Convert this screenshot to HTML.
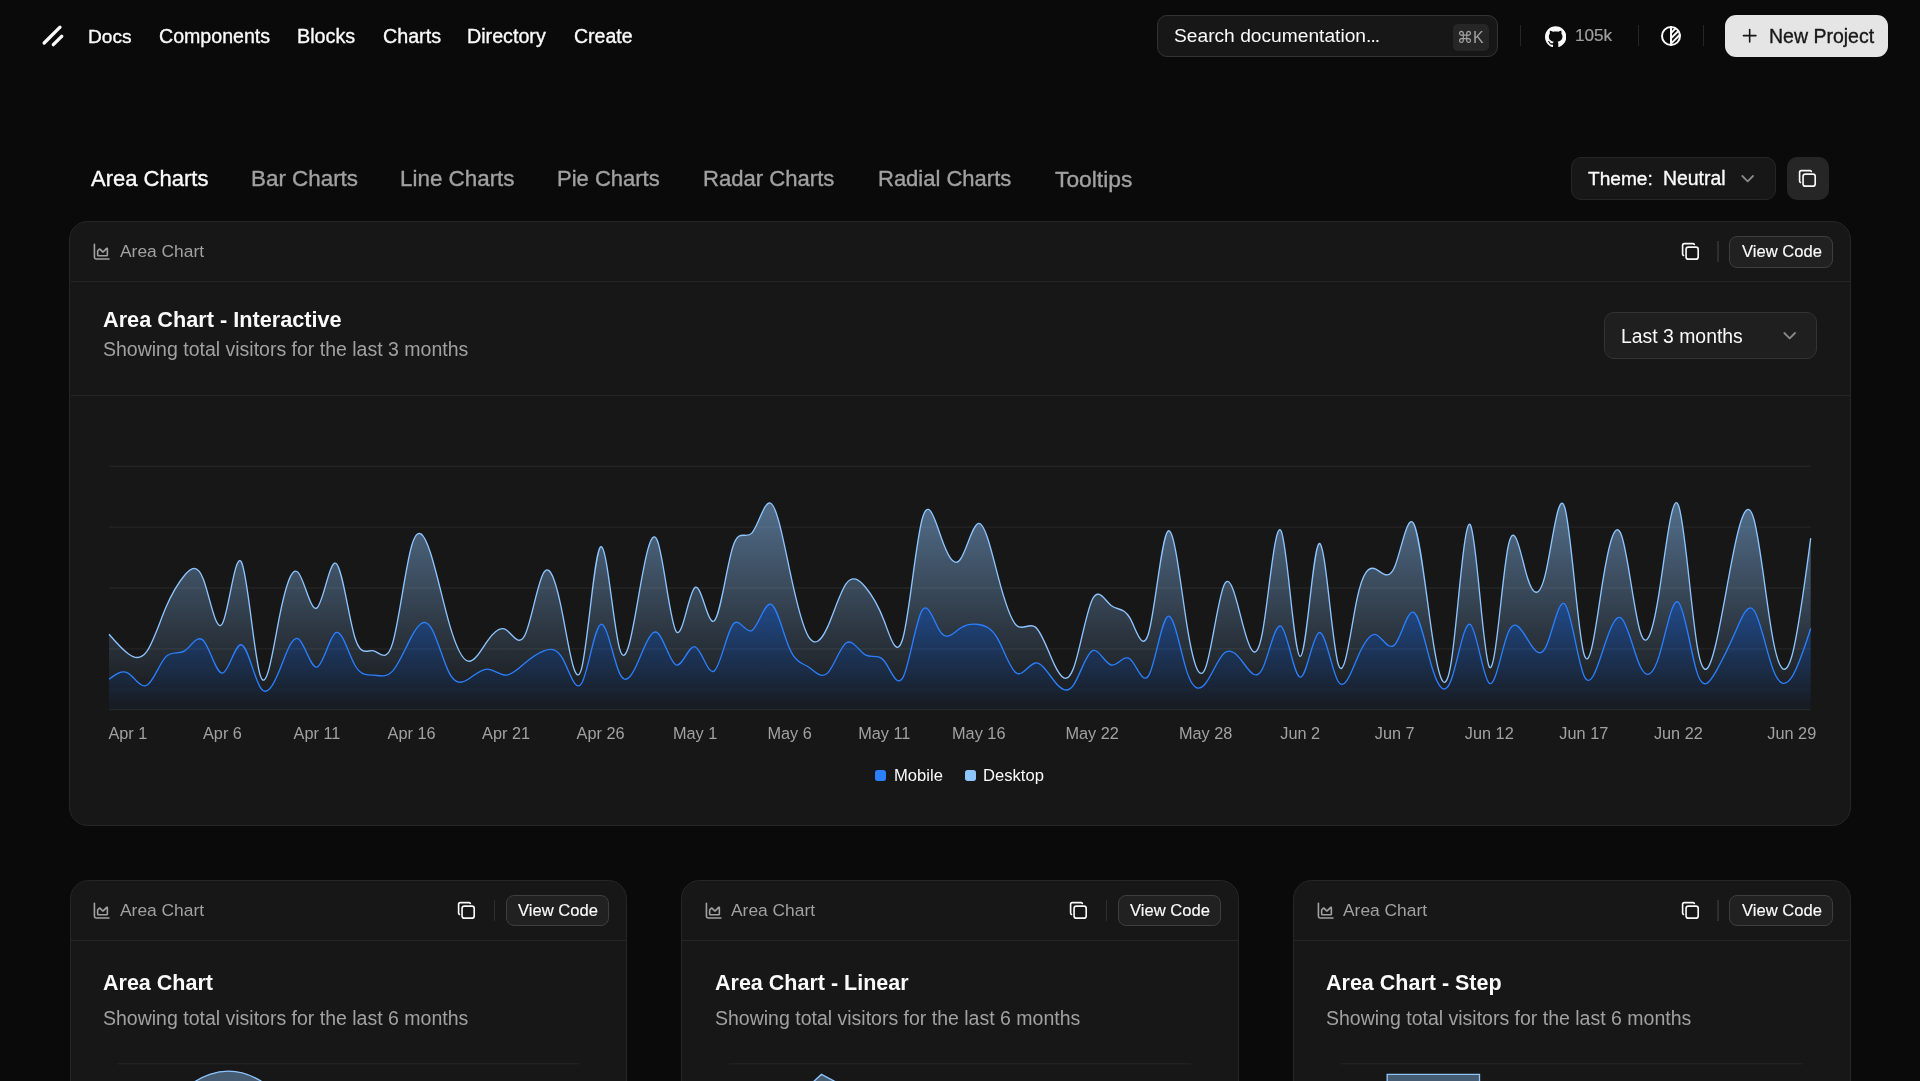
<!DOCTYPE html>
<html><head><meta charset="utf-8"><style>
html,body{margin:0;padding:0;background:#0a0a0a;width:1920px;height:1081px;overflow:hidden;}
body{position:relative;font-family:"Liberation Sans",sans-serif;}
.t{position:absolute;white-space:nowrap;line-height:normal;will-change:transform;}
.m{-webkit-text-stroke:0.35px currentColor;}
.icon{position:absolute;}
.icon svg{width:100%;height:100%;display:block;}
.card{position:absolute;background:#171717;border:1.33px solid #262626;border-radius:18.67px;box-sizing:border-box;overflow:hidden;}
.hline{position:absolute;height:1.33px;background:#262626;}
.sep{position:absolute;width:1.33px;background:#262626;}
.btn{position:absolute;box-sizing:border-box;border:1.33px solid #3e3e3e;background:#212121;border-radius:8px;}
</style></head><body>
<!-- header -->
<svg style="position:absolute;left:40.0px;top:22.9px" width="26.67" height="26.67" viewBox="0 0 256 256" fill="none" stroke="#fafafa" stroke-width="32" stroke-linecap="round"><line x1="208" y1="128" x2="128" y2="208"/><line x1="192" y1="40" x2="40" y2="192"/></svg>
<div class="t m" style="left:87.50px;top:25.51px;font-size:19.1px;color:#fafafa;font-weight:400;">Docs</div>
<div class="t m" style="left:158.50px;top:25.06px;font-size:19.6px;color:#fafafa;font-weight:400;">Components</div>
<div class="t m" style="left:297.40px;top:24.88px;font-size:19.8px;color:#fafafa;font-weight:400;">Blocks</div>
<div class="t m" style="left:382.60px;top:24.97px;font-size:19.7px;color:#fafafa;font-weight:400;">Charts</div>
<div class="t m" style="left:467.30px;top:24.97px;font-size:19.7px;color:#fafafa;font-weight:400;">Directory</div>
<div class="t m" style="left:574.10px;top:25.15px;font-size:19.5px;color:#fafafa;font-weight:400;">Create</div>

<div style="position:absolute;left:1157px;top:15px;width:341px;height:42px;box-sizing:border-box;border:1.33px solid #333;background:#171717;border-radius:10px"></div>
<div class="t " style="left:1173.50px;top:25.32px;font-size:19.2px;color:#fafafa;font-weight:400;">Search documentation<span style="letter-spacing:-0.9px">...</span></div>
<div style="position:absolute;left:1453px;top:24px;width:35.5px;height:26.7px;background:#262626;border-radius:5px"></div>
<div class="t " style="left:1457.20px;top:27.71px;font-size:15.9px;color:#a1a1a1;font-weight:400;">⌘K</div>
<div class="sep" style="left:1519.5px;top:25.4px;height:21px"></div>
<div class="icon" style="left:1544.8px;top:25.5px;width:21.33px;height:21.33px;color:#fafafa"><svg viewBox="0 0 24 24"><path fill="currentColor" d="M12 .297c-6.63 0-12 5.373-12 12 0 5.303 3.438 9.8 8.205 11.385.6.113.82-.258.82-.577 0-.285-.01-1.04-.015-2.04-3.338.724-4.042-1.61-4.042-1.61C4.422 18.070 3.633 17.7 3.633 17.7c-1.087-.744.084-.729.084-.729 1.205.084 1.838 1.236 1.838 1.236 1.07 1.835 2.809 1.305 3.495.998.108-.776.417-1.305.76-1.605-2.665-.3-5.466-1.332-5.466-5.930 0-1.310.465-2.380 1.235-3.220-.135-.303-.54-1.523.105-3.176 0 0 1.005-.322 3.3 1.230.96-.267 1.980-.399 3-.405 1.020.006 2.040.138 3 .405 2.280-1.552 3.285-1.230 3.285-1.230.645 1.653.24 2.873.12 3.176.765.84 1.230 1.910 1.230 3.220 0 4.610-2.805 5.625-5.475 5.920.42.36.81 1.096.81 2.220 0 1.606-.015 2.896-.015 3.286 0 .315.21.69.825.57C20.565 22.092 24 17.592 24 12.297c0-6.627-5.373-12-12-12"/></svg></div>
<div class="t " style="left:1575.00px;top:26.02px;font-size:17.1px;color:#a1a1a1;font-weight:400;-webkit-text-stroke:0.2px currentColor">105k</div>
<div class="sep" style="left:1637.5px;top:25.4px;height:21px"></div>
<div class="icon" style="left:1658.8px;top:23.9px;width:24px;height:24px;color:#fafafa"><svg viewBox="0 0 24 24" fill="none" stroke="currentColor" stroke-width="2" stroke-linecap="round" stroke-linejoin="round"><path d="M12 12m-9 0a9 9 0 1 0 18 0a9 9 0 1 0 -18 0"/><path d="M12 3l0 18"/><path d="M12 9l4.65 -4.65"/><path d="M12 14.3l7.37 -7.37"/><path d="M12 19.6l8.85 -8.85"/></svg></div>
<div class="sep" style="left:1703px;top:25.4px;height:21px"></div>
<div style="position:absolute;left:1725.3px;top:15px;width:162.5px;height:41.8px;background:#e5e5e5;border-radius:11px"></div>
<div class="icon" style="left:1738.7px;top:25.3px;width:21.33px;height:21.33px;color:#171717"><svg viewBox="0 0 24 24" fill="none" stroke="currentColor" stroke-width="1.8" stroke-linecap="round" stroke-linejoin="round"><path d="M5 12h14"/><path d="M12 5v14"/></svg></div>
<div class="t m" style="left:1768.50px;top:25.15px;font-size:19.5px;color:#171717;font-weight:400;">New Project</div>

<!-- tabs -->
<div class="t m" style="left:90.50px;top:166.33px;font-size:22px;color:#fafafa;font-weight:400;">Area Charts</div>
<div class="t m" style="left:251.00px;top:165.97px;font-size:22.4px;color:#a1a1a1;font-weight:400;">Bar Charts</div>
<div class="t m" style="left:400.00px;top:165.97px;font-size:22.4px;color:#a1a1a1;font-weight:400;">Line Charts</div>
<div class="t m" style="left:557.30px;top:166.33px;font-size:22px;color:#a1a1a1;font-weight:400;">Pie Charts</div>
<div class="t m" style="left:703.40px;top:166.24px;font-size:22.1px;color:#a1a1a1;font-weight:400;">Radar Charts</div>
<div class="t m" style="left:877.50px;top:166.33px;font-size:22px;color:#a1a1a1;font-weight:400;">Radial Charts</div>
<div class="t m" style="left:1055.00px;top:165.61px;font-size:22.8px;color:#a1a1a1;font-weight:400;">Tooltips</div>

<div style="position:absolute;left:1571px;top:157px;width:205px;height:43px;box-sizing:border-box;border:1.33px solid #262626;background:#171717;border-radius:10px"></div>
<div class="t m" style="left:1587.80px;top:167.71px;font-size:19.1px;color:#fafafa;font-weight:400;">Theme:</div>
<div class="t m" style="left:1662.80px;top:167.44px;font-size:19.4px;color:#fafafa;font-weight:400;">Neutral</div>
<div class="icon" style="left:1737.3px;top:168px;width:21.33px;height:21.33px;color:#8a8a8a"><svg viewBox="0 0 24 24" fill="none" stroke="currentColor" stroke-width="2" stroke-linecap="round" stroke-linejoin="round"><path d="m6 9 6 6 6-6"/></svg></div>
<div style="position:absolute;left:1787px;top:157px;width:42px;height:43px;background:#262626;border-radius:10px"></div>
<div class="icon" style="left:1797.1px;top:168.3px;width:20.8px;height:20.8px;color:#fafafa"><svg viewBox="0 0 24 24" fill="none" stroke="currentColor" stroke-width="1.9" stroke-linecap="round" stroke-linejoin="round"><path d="M7 9.667a2.667 2.667 0 0 1 2.667 -2.667h8.666a2.667 2.667 0 0 1 2.667 2.667v8.666a2.667 2.667 0 0 1 -2.667 2.667h-8.666a2.667 2.667 0 0 1 -2.667 -2.667z"/><path d="M4.012 16.737a2.005 2.005 0 0 1 -1.012 -1.737v-10c0 -1.1 .9 -2 2 -2h10c.75 0 1.158 .385 1.5 1"/></svg></div>

<!-- main card -->
<div class="card" style="left:69.3px;top:221.3px;width:1781.4px;height:604.9px"></div>
<div class="hline" style="left:70.6px;top:281px;width:1779px"></div>
<div class="icon" style="left:91.88px;top:242.28px;width:19.4px;height:19.4px;color:#a1a1a1"><svg viewBox="0 0 24 24" fill="none" stroke="currentColor" stroke-width="2" stroke-linecap="round" stroke-linejoin="round"><path d="M3 3v16a2 2 0 0 0 2 2h16"/><path d="M7 11.207a.5.5 0 0 1 .146-.353l2-2a.5.5 0 0 1 .708 0l3.292 3.292a.5.5 0 0 0 .708 0l4.292-4.292a.5.5 0 0 1 .854.353V16a1 1 0 0 1-1 1H8a1 1 0 0 1-1-1z"/></svg></div><div class="t " style="left:119.50px;top:241.35px;font-size:17.4px;color:#a1a1a1;font-weight:400;">Area Chart</div><div class="icon" style="left:1680.00px;top:241.40px;width:20.8px;height:20.8px;color:#fafafa"><svg viewBox="0 0 24 24" fill="none" stroke="currentColor" stroke-width="1.9" stroke-linecap="round" stroke-linejoin="round"><path d="M7 9.667a2.667 2.667 0 0 1 2.667 -2.667h8.666a2.667 2.667 0 0 1 2.667 2.667v8.666a2.667 2.667 0 0 1 -2.667 2.667h-8.666a2.667 2.667 0 0 1 -2.667 -2.667z"/><path d="M4.012 16.737a2.005 2.005 0 0 1 -1.012 -1.737v-10c0 -1.1 .9 -2 2 -2h10c.75 0 1.158 .385 1.5 1"/></svg></div><div class="sep" style="left:1717.30px;top:241.20px;height:21.2px;background:#2e2e2e"></div><div class="btn" style="left:1729.30px;top:236.10px;width:103.7px;height:31.9px"></div><div class="t " style="left:1742.10px;top:242.17px;font-size:16.6px;color:#fafafa;font-weight:400;-webkit-text-stroke:0.15px currentColor">View Code</div>
<div class="t " style="left:103.00px;top:307.25px;font-size:21.7px;color:#fafafa;font-weight:700;">Area Chart - Interactive</div>
<div class="t " style="left:102.80px;top:338.05px;font-size:19.5px;color:#a1a1a1;font-weight:400;">Showing total visitors for the last 3 months</div>
<div style="position:absolute;left:1604.4px;top:312.4px;width:212.4px;height:47.1px;box-sizing:border-box;border:1.33px solid #333;background:#1f1f1f;border-radius:10px"></div>
<div class="t " style="left:1621.00px;top:325.34px;font-size:19.4px;color:#fafafa;font-weight:400;">Last 3 months</div>
<div class="icon" style="left:1778.7px;top:325.3px;width:21.33px;height:21.33px;color:#8a8a8a"><svg viewBox="0 0 24 24" fill="none" stroke="currentColor" stroke-width="2" stroke-linecap="round" stroke-linejoin="round"><path d="m6 9 6 6 6-6"/></svg></div>
<div class="hline" style="left:70.6px;top:394.5px;width:1779px"></div>

<svg style="position:absolute;left:0;top:0" width="1920" height="1081">
<defs>
<linearGradient id="fillDesktop" x1="0" y1="0" x2="0" y2="1"><stop offset="5%" stop-color="#8ec5ff" stop-opacity="0.8"/><stop offset="95%" stop-color="#8ec5ff" stop-opacity="0.1"/></linearGradient>
<linearGradient id="fillMobile" x1="0" y1="0" x2="0" y2="1"><stop offset="5%" stop-color="#2b7fff" stop-opacity="0.8"/><stop offset="95%" stop-color="#2b7fff" stop-opacity="0.1"/></linearGradient>
</defs>
<g stroke="#242424" stroke-width="1.33">
<line x1="109" x2="1810.7" y1="466.4" y2="466.4"/><line x1="109" x2="1810.7" y1="527.2" y2="527.2"/><line x1="109" x2="1810.7" y1="588" y2="588"/><line x1="109" x2="1810.7" y1="648.8" y2="648.8"/><line x1="109" x2="1810.7" y1="709.6" y2="709.6"/>
</g>
<path d="M109,679.2C115.3,674.39,121.61,669.59,127.91,673.12C134.21,676.65,140.51,688.52,146.82,685.28C153.12,682.04,159.42,663.69,165.72,656.91C172.03,650.12,178.33,654.89,184.63,650.83C190.93,646.76,197.24,633.85,203.54,640.69C209.84,647.54,216.14,674.13,222.45,673.12C228.75,672.11,235.05,643.48,241.35,644.75C247.66,646.01,253.96,677.16,260.26,687.31C266.56,697.46,272.87,686.61,279.17,671.09C285.47,655.58,291.78,635.4,298.08,638.67C304.38,641.93,310.68,668.65,316.99,667.04C323.29,665.43,329.59,635.51,335.89,632.59C342.2,629.66,348.5,653.74,354.8,665.01C361.1,676.28,367.41,674.74,373.71,675.15C380.01,675.55,386.31,677.89,392.62,671.09C398.92,664.29,405.22,648.36,411.52,636.64C417.83,624.92,424.13,617.43,430.43,626.51C436.73,635.58,443.04,661.22,449.34,673.12C455.64,685.02,461.95,683.2,468.25,679.2C474.55,675.2,480.85,669.04,487.16,669.07C493.46,669.1,499.76,675.32,506.06,675.15C512.37,674.97,518.67,668.4,524.97,662.99C531.27,657.58,537.58,653.34,543.88,650.83C550.18,648.32,556.48,647.54,562.79,658.93C569.09,670.33,575.39,693.9,581.69,683.25C588,672.61,594.3,627.75,600.6,624.48C606.9,621.21,613.21,659.54,619.51,673.12C625.81,686.7,632.12,675.53,638.42,660.96C644.72,646.39,651.02,628.43,657.33,632.59C663.63,636.74,669.93,663.01,676.23,665.01C682.54,667.02,688.84,644.75,695.14,646.77C701.44,648.8,707.75,675.11,714.05,671.09C720.35,667.08,726.65,632.74,732.96,624.48C739.26,616.22,745.56,634.03,751.86,630.56C758.17,627.09,764.47,602.34,770.77,604.21C777.07,606.08,783.38,634.57,789.68,648.8C795.98,663.03,802.29,662.99,808.59,667.04C814.89,671.09,821.19,679.23,827.5,673.12C833.8,667.01,840.1,646.66,846.4,642.72C852.71,638.78,859.01,651.25,865.31,654.88C871.61,658.51,877.92,653.28,884.22,660.96C890.52,668.64,896.82,689.21,903.13,677.17C909.43,665.13,915.73,620.47,922.03,610.29C928.34,600.11,934.64,624.41,940.94,632.59C947.24,640.76,953.55,632.81,959.85,628.53C966.15,624.25,972.46,623.64,978.76,624.48C985.06,625.32,991.36,627.6,997.67,638.67C1003.97,649.74,1010.27,669.6,1016.57,673.12C1022.88,676.64,1029.18,663.84,1035.48,662.99C1041.78,662.14,1048.09,673.25,1054.39,681.23C1060.69,689.21,1066.99,694.06,1073.3,685.28C1079.6,676.5,1085.9,654.1,1092.2,650.83C1098.51,647.55,1104.81,663.39,1111.11,665.01C1117.41,666.63,1123.72,654.03,1130.02,658.93C1136.32,663.83,1142.63,686.23,1148.93,675.15C1155.23,664.06,1161.53,619.5,1167.84,616.37C1174.14,613.25,1180.44,651.55,1186.74,671.09C1193.05,690.64,1199.35,691.41,1205.65,683.25C1211.95,675.09,1218.26,657.99,1224.56,652.85C1230.86,647.71,1237.16,654.53,1243.47,662.99C1249.77,671.44,1256.07,681.54,1262.37,669.07C1268.68,656.59,1274.98,621.55,1281.28,626.51C1287.58,631.47,1293.89,676.43,1300.19,677.17C1306.49,677.92,1312.8,634.45,1319.1,632.59C1325.4,630.73,1331.7,670.48,1338.01,681.23C1344.31,691.98,1350.61,673.73,1356.91,658.93C1363.22,644.14,1369.52,632.79,1375.82,634.61C1382.12,636.44,1388.43,651.44,1394.73,644.75C1401.03,638.05,1407.33,609.66,1413.64,612.32C1419.94,614.98,1426.24,648.69,1432.54,669.07C1438.85,689.44,1445.15,696.48,1451.45,679.2C1457.75,661.92,1464.06,620.33,1470.36,624.48C1476.66,628.63,1482.97,678.53,1489.27,683.25C1495.57,687.98,1501.87,647.54,1508.18,632.59C1514.48,617.63,1520.78,628.16,1527.08,638.67C1533.39,649.18,1539.69,659.67,1545.99,646.77C1552.29,633.88,1558.6,597.6,1564.9,604.21C1571.2,610.82,1577.5,660.32,1583.81,675.15C1590.11,689.97,1596.41,670.14,1602.71,650.83C1609.02,631.52,1615.32,612.74,1621.62,618.4C1627.92,624.06,1634.23,654.16,1640.53,667.04C1646.83,679.92,1653.14,675.57,1659.44,654.88C1665.74,634.19,1672.04,597.14,1678.35,602.19C1684.65,607.23,1690.95,654.36,1697.25,673.12C1703.56,691.88,1709.86,682.29,1716.16,671.09C1722.46,659.9,1728.77,647.12,1735.07,632.59C1741.37,618.06,1747.67,601.78,1753.98,610.29C1760.28,618.81,1766.58,652.11,1772.88,669.07C1779.19,686.03,1785.49,686.65,1791.79,677.17C1798.09,667.69,1804.4,648.11,1810.7,628.53L1810.7,709.6L109,709.6Z" fill="url(#fillMobile)" fill-opacity="0.6"/>
<path d="M109,634.21C115.3,641.49,121.61,648.77,127.91,653.46C134.21,658.16,140.51,660.27,146.82,651.43C153.12,642.6,159.42,622.83,165.72,607.86C172.03,592.89,178.33,582.73,184.63,575.23C190.93,567.74,197.24,562.91,203.54,579.69C209.84,596.47,216.14,634.86,222.45,623.47C228.75,612.07,235.05,550.89,241.35,561.86C247.66,572.82,253.96,655.94,260.26,675.35C266.56,694.76,272.87,650.46,279.17,618.2C285.47,585.94,291.78,565.71,298.08,572.39C304.38,579.07,310.68,612.66,316.99,607.86C323.29,603.07,329.59,559.89,335.89,563.27C342.2,566.66,348.5,616.59,354.8,637.25C361.1,657.9,367.41,649.28,373.71,650.83C380.01,652.38,386.31,664.1,392.62,643.13C398.92,622.15,405.22,568.47,411.52,546.25C417.83,524.03,424.13,533.26,430.43,552.74C436.73,572.21,443.04,601.92,449.34,623.87C455.64,645.82,461.95,660.01,468.25,661.16C474.55,662.31,480.85,650.42,487.16,641.3C493.46,632.18,499.76,625.82,506.06,629.75C512.37,633.68,518.67,647.89,524.97,635.02C531.27,622.15,537.58,582.19,543.88,572.39C550.18,562.6,556.48,582.98,562.79,615.36C569.09,647.74,575.39,692.12,581.69,668.05C588,643.99,594.3,551.47,600.6,546.86C606.9,542.25,613.21,625.54,619.51,648.39C625.81,671.25,632.12,633.68,638.42,597.12C644.72,560.56,651.02,525.01,657.33,540.58C663.63,556.15,669.93,622.84,676.23,631.57C682.54,640.31,688.84,591.08,695.14,587.39C701.44,583.71,707.75,625.56,714.05,621.03C720.35,616.51,726.65,565.59,732.96,546.45C739.26,527.32,745.56,539.96,751.86,533.08C758.17,526.19,764.47,499.78,770.77,503.29C777.07,506.79,783.38,540.2,789.68,570.17C795.98,600.13,802.29,626.64,808.59,636.84C814.89,647.04,821.19,640.94,827.5,627.11C833.8,613.29,840.1,591.76,846.4,583.34C852.71,574.92,859.01,579.61,865.31,586.99C871.61,594.36,877.92,604.41,884.22,621.03C890.52,637.66,896.82,660.86,903.13,637.25C909.43,613.64,915.73,543.23,922.03,519.5C928.34,495.77,934.64,518.72,940.94,536.73C947.24,554.73,953.55,567.77,959.85,560.03C966.15,552.29,972.46,523.77,978.76,523.35C985.06,522.93,991.36,550.63,997.67,574.83C1003.97,599.03,1010.27,619.73,1016.57,625.49C1022.88,631.26,1029.18,622.09,1035.48,627.11C1041.78,632.14,1048.09,651.36,1054.39,664.61C1060.69,677.85,1066.99,685.12,1073.3,668.86C1079.6,652.61,1085.9,612.83,1092.2,599.75C1098.51,586.68,1104.81,600.33,1111.11,605.43C1117.41,610.53,1123.72,607.1,1130.02,618.2C1136.32,629.3,1142.63,654.93,1148.93,631.98C1155.23,609.03,1161.53,537.51,1167.84,531.25C1174.14,525,1180.44,584.01,1186.74,623.87C1193.05,663.74,1199.35,684.45,1205.65,667.45C1211.95,650.44,1218.26,595.71,1224.56,583.95C1230.86,572.18,1237.16,603.39,1243.47,626.91C1249.77,650.44,1256.07,666.29,1262.37,632.99C1268.68,599.69,1274.98,517.25,1281.28,531.25C1287.58,545.26,1293.89,655.72,1300.19,656.3C1306.49,656.88,1312.8,547.59,1319.1,543.62C1325.4,539.64,1331.7,640.98,1338.01,663.39C1344.31,685.8,1350.61,629.28,1356.91,599.35C1363.22,569.42,1369.52,566.1,1375.82,569.15C1382.12,572.21,1388.43,581.64,1394.73,566.72C1401.03,551.8,1407.33,512.52,1413.64,523.55C1419.94,534.58,1426.24,595.93,1432.54,637.65C1438.85,679.38,1445.15,701.49,1451.45,660.55C1457.75,619.62,1464.06,515.64,1470.36,524.77C1476.66,533.89,1482.97,656.12,1489.27,666.84C1495.57,677.55,1501.87,576.75,1508.18,546.25C1514.48,515.75,1520.78,555.55,1527.08,576.45C1533.39,597.35,1539.69,599.35,1545.99,571.58C1552.29,543.81,1558.6,486.27,1564.9,507.95C1571.2,529.63,1577.5,630.53,1583.81,653.46C1590.11,676.39,1596.41,621.34,1602.71,581.72C1609.02,542.09,1615.32,517.89,1621.62,535.71C1627.92,553.54,1634.23,613.39,1640.53,632.79C1646.83,652.18,1653.14,631.12,1659.44,590.63C1665.74,550.15,1672.04,490.25,1678.35,504.91C1684.65,519.56,1690.95,608.76,1697.25,646.37C1703.56,683.97,1709.86,669.98,1716.16,642.52C1722.46,615.06,1728.77,574.13,1735.07,544.63C1741.37,515.13,1747.67,497.06,1753.98,519.5C1760.28,541.93,1766.58,604.88,1772.88,638.87C1779.19,672.86,1785.49,677.91,1791.79,656.3C1798.09,634.69,1804.4,586.42,1810.7,538.14L1810.7,628.53C1804.4,648.11,1798.09,667.69,1791.79,677.17C1785.49,686.65,1779.19,686.03,1772.88,669.07C1766.58,652.11,1760.28,618.81,1753.98,610.29C1747.67,601.78,1741.37,618.06,1735.07,632.59C1728.77,647.12,1722.46,659.9,1716.16,671.09C1709.86,682.29,1703.56,691.88,1697.25,673.12C1690.95,654.36,1684.65,607.23,1678.35,602.19C1672.04,597.14,1665.74,634.19,1659.44,654.88C1653.14,675.57,1646.83,679.92,1640.53,667.04C1634.23,654.16,1627.92,624.06,1621.62,618.4C1615.32,612.74,1609.02,631.52,1602.71,650.83C1596.41,670.14,1590.11,689.97,1583.81,675.15C1577.5,660.32,1571.2,610.82,1564.9,604.21C1558.6,597.6,1552.29,633.88,1545.99,646.77C1539.69,659.67,1533.39,649.18,1527.08,638.67C1520.78,628.16,1514.48,617.63,1508.18,632.59C1501.87,647.54,1495.57,687.98,1489.27,683.25C1482.97,678.53,1476.66,628.63,1470.36,624.48C1464.06,620.33,1457.75,661.92,1451.45,679.2C1445.15,696.48,1438.85,689.44,1432.54,669.07C1426.24,648.69,1419.94,614.98,1413.64,612.32C1407.33,609.66,1401.03,638.05,1394.73,644.75C1388.43,651.44,1382.12,636.44,1375.82,634.61C1369.52,632.79,1363.22,644.14,1356.91,658.93C1350.61,673.73,1344.31,691.98,1338.01,681.23C1331.7,670.48,1325.4,630.73,1319.1,632.59C1312.8,634.45,1306.49,677.92,1300.19,677.17C1293.89,676.43,1287.58,631.47,1281.28,626.51C1274.98,621.55,1268.68,656.59,1262.37,669.07C1256.07,681.54,1249.77,671.44,1243.47,662.99C1237.16,654.53,1230.86,647.71,1224.56,652.85C1218.26,657.99,1211.95,675.09,1205.65,683.25C1199.35,691.41,1193.05,690.64,1186.74,671.09C1180.44,651.55,1174.14,613.25,1167.84,616.37C1161.53,619.5,1155.23,664.06,1148.93,675.15C1142.63,686.23,1136.32,663.83,1130.02,658.93C1123.72,654.03,1117.41,666.63,1111.11,665.01C1104.81,663.39,1098.51,647.55,1092.2,650.83C1085.9,654.1,1079.6,676.5,1073.3,685.28C1066.99,694.06,1060.69,689.21,1054.39,681.23C1048.09,673.25,1041.78,662.14,1035.48,662.99C1029.18,663.84,1022.88,676.64,1016.57,673.12C1010.27,669.6,1003.97,649.74,997.67,638.67C991.36,627.6,985.06,625.32,978.76,624.48C972.46,623.64,966.15,624.25,959.85,628.53C953.55,632.81,947.24,640.76,940.94,632.59C934.64,624.41,928.34,600.11,922.03,610.29C915.73,620.47,909.43,665.13,903.13,677.17C896.82,689.21,890.52,668.64,884.22,660.96C877.92,653.28,871.61,658.51,865.31,654.88C859.01,651.25,852.71,638.78,846.4,642.72C840.1,646.66,833.8,667.01,827.5,673.12C821.19,679.23,814.89,671.09,808.59,667.04C802.29,662.99,795.98,663.03,789.68,648.8C783.38,634.57,777.07,606.08,770.77,604.21C764.47,602.34,758.17,627.09,751.86,630.56C745.56,634.03,739.26,616.22,732.96,624.48C726.65,632.74,720.35,667.08,714.05,671.09C707.75,675.11,701.44,648.8,695.14,646.77C688.84,644.75,682.54,667.02,676.23,665.01C669.93,663.01,663.63,636.74,657.33,632.59C651.02,628.43,644.72,646.39,638.42,660.96C632.12,675.53,625.81,686.7,619.51,673.12C613.21,659.54,606.9,621.21,600.6,624.48C594.3,627.75,588,672.61,581.69,683.25C575.39,693.9,569.09,670.33,562.79,658.93C556.48,647.54,550.18,648.32,543.88,650.83C537.58,653.34,531.27,657.58,524.97,662.99C518.67,668.4,512.37,674.97,506.06,675.15C499.76,675.32,493.46,669.1,487.16,669.07C480.85,669.04,474.55,675.2,468.25,679.2C461.95,683.2,455.64,685.02,449.34,673.12C443.04,661.22,436.73,635.58,430.43,626.51C424.13,617.43,417.83,624.92,411.52,636.64C405.22,648.36,398.92,664.29,392.62,671.09C386.31,677.89,380.01,675.55,373.71,675.15C367.41,674.74,361.1,676.28,354.8,665.01C348.5,653.74,342.2,629.66,335.89,632.59C329.59,635.51,323.29,665.43,316.99,667.04C310.68,668.65,304.38,641.93,298.08,638.67C291.78,635.4,285.47,655.58,279.17,671.09C272.87,686.61,266.56,697.46,260.26,687.31C253.96,677.16,247.66,646.01,241.35,644.75C235.05,643.48,228.75,672.11,222.45,673.12C216.14,674.13,209.84,647.54,203.54,640.69C197.24,633.85,190.93,646.76,184.63,650.83C178.33,654.89,172.03,650.12,165.72,656.91C159.42,663.69,153.12,682.04,146.82,685.28C140.51,688.52,134.21,676.65,127.91,673.12C121.61,669.59,115.3,674.39,109,679.2Z" fill="url(#fillDesktop)" fill-opacity="0.6"/>
<path d="M109,679.2C115.3,674.39,121.61,669.59,127.91,673.12C134.21,676.65,140.51,688.52,146.82,685.28C153.12,682.04,159.42,663.69,165.72,656.91C172.03,650.12,178.33,654.89,184.63,650.83C190.93,646.76,197.24,633.85,203.54,640.69C209.84,647.54,216.14,674.13,222.45,673.12C228.75,672.11,235.05,643.48,241.35,644.75C247.66,646.01,253.96,677.16,260.26,687.31C266.56,697.46,272.87,686.61,279.17,671.09C285.47,655.58,291.78,635.4,298.08,638.67C304.38,641.93,310.68,668.65,316.99,667.04C323.29,665.43,329.59,635.51,335.89,632.59C342.2,629.66,348.5,653.74,354.8,665.01C361.1,676.28,367.41,674.74,373.71,675.15C380.01,675.55,386.31,677.89,392.62,671.09C398.92,664.29,405.22,648.36,411.52,636.64C417.83,624.92,424.13,617.43,430.43,626.51C436.73,635.58,443.04,661.22,449.34,673.12C455.64,685.02,461.95,683.2,468.25,679.2C474.55,675.2,480.85,669.04,487.16,669.07C493.46,669.1,499.76,675.32,506.06,675.15C512.37,674.97,518.67,668.4,524.97,662.99C531.27,657.58,537.58,653.34,543.88,650.83C550.18,648.32,556.48,647.54,562.79,658.93C569.09,670.33,575.39,693.9,581.69,683.25C588,672.61,594.3,627.75,600.6,624.48C606.9,621.21,613.21,659.54,619.51,673.12C625.81,686.7,632.12,675.53,638.42,660.96C644.72,646.39,651.02,628.43,657.33,632.59C663.63,636.74,669.93,663.01,676.23,665.01C682.54,667.02,688.84,644.75,695.14,646.77C701.44,648.8,707.75,675.11,714.05,671.09C720.35,667.08,726.65,632.74,732.96,624.48C739.26,616.22,745.56,634.03,751.86,630.56C758.17,627.09,764.47,602.34,770.77,604.21C777.07,606.08,783.38,634.57,789.68,648.8C795.98,663.03,802.29,662.99,808.59,667.04C814.89,671.09,821.19,679.23,827.5,673.12C833.8,667.01,840.1,646.66,846.4,642.72C852.71,638.78,859.01,651.25,865.31,654.88C871.61,658.51,877.92,653.28,884.22,660.96C890.52,668.64,896.82,689.21,903.13,677.17C909.43,665.13,915.73,620.47,922.03,610.29C928.34,600.11,934.64,624.41,940.94,632.59C947.24,640.76,953.55,632.81,959.85,628.53C966.15,624.25,972.46,623.64,978.76,624.48C985.06,625.32,991.36,627.6,997.67,638.67C1003.97,649.74,1010.27,669.6,1016.57,673.12C1022.88,676.64,1029.18,663.84,1035.48,662.99C1041.78,662.14,1048.09,673.25,1054.39,681.23C1060.69,689.21,1066.99,694.06,1073.3,685.28C1079.6,676.5,1085.9,654.1,1092.2,650.83C1098.51,647.55,1104.81,663.39,1111.11,665.01C1117.41,666.63,1123.72,654.03,1130.02,658.93C1136.32,663.83,1142.63,686.23,1148.93,675.15C1155.23,664.06,1161.53,619.5,1167.84,616.37C1174.14,613.25,1180.44,651.55,1186.74,671.09C1193.05,690.64,1199.35,691.41,1205.65,683.25C1211.95,675.09,1218.26,657.99,1224.56,652.85C1230.86,647.71,1237.16,654.53,1243.47,662.99C1249.77,671.44,1256.07,681.54,1262.37,669.07C1268.68,656.59,1274.98,621.55,1281.28,626.51C1287.58,631.47,1293.89,676.43,1300.19,677.17C1306.49,677.92,1312.8,634.45,1319.1,632.59C1325.4,630.73,1331.7,670.48,1338.01,681.23C1344.31,691.98,1350.61,673.73,1356.91,658.93C1363.22,644.14,1369.52,632.79,1375.82,634.61C1382.12,636.44,1388.43,651.44,1394.73,644.75C1401.03,638.05,1407.33,609.66,1413.64,612.32C1419.94,614.98,1426.24,648.69,1432.54,669.07C1438.85,689.44,1445.15,696.48,1451.45,679.2C1457.75,661.92,1464.06,620.33,1470.36,624.48C1476.66,628.63,1482.97,678.53,1489.27,683.25C1495.57,687.98,1501.87,647.54,1508.18,632.59C1514.48,617.63,1520.78,628.16,1527.08,638.67C1533.39,649.18,1539.69,659.67,1545.99,646.77C1552.29,633.88,1558.6,597.6,1564.9,604.21C1571.2,610.82,1577.5,660.32,1583.81,675.15C1590.11,689.97,1596.41,670.14,1602.71,650.83C1609.02,631.52,1615.32,612.74,1621.62,618.4C1627.92,624.06,1634.23,654.16,1640.53,667.04C1646.83,679.92,1653.14,675.57,1659.44,654.88C1665.74,634.19,1672.04,597.14,1678.35,602.19C1684.65,607.23,1690.95,654.36,1697.25,673.12C1703.56,691.88,1709.86,682.29,1716.16,671.09C1722.46,659.9,1728.77,647.12,1735.07,632.59C1741.37,618.06,1747.67,601.78,1753.98,610.29C1760.28,618.81,1766.58,652.11,1772.88,669.07C1779.19,686.03,1785.49,686.65,1791.79,677.17C1798.09,667.69,1804.4,648.11,1810.7,628.53" fill="none" stroke="#2b7fff" stroke-width="1.33"/>
<path d="M109,634.21C115.3,641.49,121.61,648.77,127.91,653.46C134.21,658.16,140.51,660.27,146.82,651.43C153.12,642.6,159.42,622.83,165.72,607.86C172.03,592.89,178.33,582.73,184.63,575.23C190.93,567.74,197.24,562.91,203.54,579.69C209.84,596.47,216.14,634.86,222.45,623.47C228.75,612.07,235.05,550.89,241.35,561.86C247.66,572.82,253.96,655.94,260.26,675.35C266.56,694.76,272.87,650.46,279.17,618.2C285.47,585.94,291.78,565.71,298.08,572.39C304.38,579.07,310.68,612.66,316.99,607.86C323.29,603.07,329.59,559.89,335.89,563.27C342.2,566.66,348.5,616.59,354.8,637.25C361.1,657.9,367.41,649.28,373.71,650.83C380.01,652.38,386.31,664.1,392.62,643.13C398.92,622.15,405.22,568.47,411.52,546.25C417.83,524.03,424.13,533.26,430.43,552.74C436.73,572.21,443.04,601.92,449.34,623.87C455.64,645.82,461.95,660.01,468.25,661.16C474.55,662.31,480.85,650.42,487.16,641.3C493.46,632.18,499.76,625.82,506.06,629.75C512.37,633.68,518.67,647.89,524.97,635.02C531.27,622.15,537.58,582.19,543.88,572.39C550.18,562.6,556.48,582.98,562.79,615.36C569.09,647.74,575.39,692.12,581.69,668.05C588,643.99,594.3,551.47,600.6,546.86C606.9,542.25,613.21,625.54,619.51,648.39C625.81,671.25,632.12,633.68,638.42,597.12C644.72,560.56,651.02,525.01,657.33,540.58C663.63,556.15,669.93,622.84,676.23,631.57C682.54,640.31,688.84,591.08,695.14,587.39C701.44,583.71,707.75,625.56,714.05,621.03C720.35,616.51,726.65,565.59,732.96,546.45C739.26,527.32,745.56,539.96,751.86,533.08C758.17,526.19,764.47,499.78,770.77,503.29C777.07,506.79,783.38,540.2,789.68,570.17C795.98,600.13,802.29,626.64,808.59,636.84C814.89,647.04,821.19,640.94,827.5,627.11C833.8,613.29,840.1,591.76,846.4,583.34C852.71,574.92,859.01,579.61,865.31,586.99C871.61,594.36,877.92,604.41,884.22,621.03C890.52,637.66,896.82,660.86,903.13,637.25C909.43,613.64,915.73,543.23,922.03,519.5C928.34,495.77,934.64,518.72,940.94,536.73C947.24,554.73,953.55,567.77,959.85,560.03C966.15,552.29,972.46,523.77,978.76,523.35C985.06,522.93,991.36,550.63,997.67,574.83C1003.97,599.03,1010.27,619.73,1016.57,625.49C1022.88,631.26,1029.18,622.09,1035.48,627.11C1041.78,632.14,1048.09,651.36,1054.39,664.61C1060.69,677.85,1066.99,685.12,1073.3,668.86C1079.6,652.61,1085.9,612.83,1092.2,599.75C1098.51,586.68,1104.81,600.33,1111.11,605.43C1117.41,610.53,1123.72,607.1,1130.02,618.2C1136.32,629.3,1142.63,654.93,1148.93,631.98C1155.23,609.03,1161.53,537.51,1167.84,531.25C1174.14,525,1180.44,584.01,1186.74,623.87C1193.05,663.74,1199.35,684.45,1205.65,667.45C1211.95,650.44,1218.26,595.71,1224.56,583.95C1230.86,572.18,1237.16,603.39,1243.47,626.91C1249.77,650.44,1256.07,666.29,1262.37,632.99C1268.68,599.69,1274.98,517.25,1281.28,531.25C1287.58,545.26,1293.89,655.72,1300.19,656.3C1306.49,656.88,1312.8,547.59,1319.1,543.62C1325.4,539.64,1331.7,640.98,1338.01,663.39C1344.31,685.8,1350.61,629.28,1356.91,599.35C1363.22,569.42,1369.52,566.1,1375.82,569.15C1382.12,572.21,1388.43,581.64,1394.73,566.72C1401.03,551.8,1407.33,512.52,1413.64,523.55C1419.94,534.58,1426.24,595.93,1432.54,637.65C1438.85,679.38,1445.15,701.49,1451.45,660.55C1457.75,619.62,1464.06,515.64,1470.36,524.77C1476.66,533.89,1482.97,656.12,1489.27,666.84C1495.57,677.55,1501.87,576.75,1508.18,546.25C1514.48,515.75,1520.78,555.55,1527.08,576.45C1533.39,597.35,1539.69,599.35,1545.99,571.58C1552.29,543.81,1558.6,486.27,1564.9,507.95C1571.2,529.63,1577.5,630.53,1583.81,653.46C1590.11,676.39,1596.41,621.34,1602.71,581.72C1609.02,542.09,1615.32,517.89,1621.62,535.71C1627.92,553.54,1634.23,613.39,1640.53,632.79C1646.83,652.18,1653.14,631.12,1659.44,590.63C1665.74,550.15,1672.04,490.25,1678.35,504.91C1684.65,519.56,1690.95,608.76,1697.25,646.37C1703.56,683.97,1709.86,669.98,1716.16,642.52C1722.46,615.06,1728.77,574.13,1735.07,544.63C1741.37,515.13,1747.67,497.06,1753.98,519.5C1760.28,541.93,1766.58,604.88,1772.88,638.87C1779.19,672.86,1785.49,677.91,1791.79,656.3C1798.09,634.69,1804.4,586.42,1810.7,538.14" fill="none" stroke="#8ec5ff" stroke-width="1.33"/>
<g font-family="Liberation Sans" font-size="16.3" fill="#a1a1a1"><text x="127.91" y="739.2" text-anchor="middle">Apr 1</text><text x="222.45" y="739.2" text-anchor="middle">Apr 6</text><text x="316.99" y="739.2" text-anchor="middle">Apr 11</text><text x="411.52" y="739.2" text-anchor="middle">Apr 16</text><text x="506.06" y="739.2" text-anchor="middle">Apr 21</text><text x="600.60" y="739.2" text-anchor="middle">Apr 26</text><text x="695.14" y="739.2" text-anchor="middle">May 1</text><text x="789.68" y="739.2" text-anchor="middle">May 6</text><text x="884.22" y="739.2" text-anchor="middle">May 11</text><text x="978.76" y="739.2" text-anchor="middle">May 16</text><text x="1092.20" y="739.2" text-anchor="middle">May 22</text><text x="1205.65" y="739.2" text-anchor="middle">May 28</text><text x="1300.19" y="739.2" text-anchor="middle">Jun 2</text><text x="1394.73" y="739.2" text-anchor="middle">Jun 7</text><text x="1489.27" y="739.2" text-anchor="middle">Jun 12</text><text x="1583.81" y="739.2" text-anchor="middle">Jun 17</text><text x="1678.35" y="739.2" text-anchor="middle">Jun 22</text><text x="1791.79" y="739.2" text-anchor="middle">Jun 29</text></g>
</svg>
<div style="position:absolute;left:875px;top:770px;width:11px;height:11px;background:#2b7fff;border-radius:2.67px"></div>
<div class="t " style="left:893.70px;top:765.77px;font-size:16.6px;color:#fafafa;font-weight:400;">Mobile</div>
<div style="position:absolute;left:964.5px;top:770px;width:11px;height:11px;background:#8ec5ff;border-radius:2.67px"></div>
<div class="t " style="left:983.40px;top:765.77px;font-size:16.6px;color:#fafafa;font-weight:400;">Desktop</div>

<!-- bottom cards -->
<div class="card" style="left:69.5px;top:879.8px;width:557.5px;height:300px"></div>
<div class="hline" style="left:70.8px;top:939.7px;width:555px"></div>
<div class="icon" style="left:92.08px;top:900.78px;width:19.4px;height:19.4px;color:#a1a1a1"><svg viewBox="0 0 24 24" fill="none" stroke="currentColor" stroke-width="2" stroke-linecap="round" stroke-linejoin="round"><path d="M3 3v16a2 2 0 0 0 2 2h16"/><path d="M7 11.207a.5.5 0 0 1 .146-.353l2-2a.5.5 0 0 1 .708 0l3.292 3.292a.5.5 0 0 0 .708 0l4.292-4.292a.5.5 0 0 1 .854.353V16a1 1 0 0 1-1 1H8a1 1 0 0 1-1-1z"/></svg></div><div class="t " style="left:119.70px;top:899.85px;font-size:17.4px;color:#a1a1a1;font-weight:400;">Area Chart</div><div class="icon" style="left:456.30px;top:899.90px;width:20.8px;height:20.8px;color:#fafafa"><svg viewBox="0 0 24 24" fill="none" stroke="currentColor" stroke-width="1.9" stroke-linecap="round" stroke-linejoin="round"><path d="M7 9.667a2.667 2.667 0 0 1 2.667 -2.667h8.666a2.667 2.667 0 0 1 2.667 2.667v8.666a2.667 2.667 0 0 1 -2.667 2.667h-8.666a2.667 2.667 0 0 1 -2.667 -2.667z"/><path d="M4.012 16.737a2.005 2.005 0 0 1 -1.012 -1.737v-10c0 -1.1 .9 -2 2 -2h10c.75 0 1.158 .385 1.5 1"/></svg></div><div class="sep" style="left:493.60px;top:899.70px;height:21.2px;background:#2e2e2e"></div><div class="btn" style="left:505.60px;top:894.60px;width:103.7px;height:31.9px"></div><div class="t " style="left:518.40px;top:900.67px;font-size:16.6px;color:#fafafa;font-weight:400;-webkit-text-stroke:0.15px currentColor">View Code</div>
<div class="t " style="left:103.00px;top:970.84px;font-size:21.5px;color:#fafafa;font-weight:700;">Area Chart</div>
<div class="t " style="left:103.00px;top:1006.75px;font-size:19.5px;color:#a1a1a1;font-weight:400;">Showing total visitors for the last 6 months</div>

<div class="card" style="left:681px;top:879.8px;width:558px;height:300px"></div>
<div class="hline" style="left:682.3px;top:939.7px;width:555.5px"></div>
<div class="icon" style="left:703.58px;top:900.78px;width:19.4px;height:19.4px;color:#a1a1a1"><svg viewBox="0 0 24 24" fill="none" stroke="currentColor" stroke-width="2" stroke-linecap="round" stroke-linejoin="round"><path d="M3 3v16a2 2 0 0 0 2 2h16"/><path d="M7 11.207a.5.5 0 0 1 .146-.353l2-2a.5.5 0 0 1 .708 0l3.292 3.292a.5.5 0 0 0 .708 0l4.292-4.292a.5.5 0 0 1 .854.353V16a1 1 0 0 1-1 1H8a1 1 0 0 1-1-1z"/></svg></div><div class="t " style="left:731.20px;top:899.85px;font-size:17.4px;color:#a1a1a1;font-weight:400;">Area Chart</div><div class="icon" style="left:1068.30px;top:899.90px;width:20.8px;height:20.8px;color:#fafafa"><svg viewBox="0 0 24 24" fill="none" stroke="currentColor" stroke-width="1.9" stroke-linecap="round" stroke-linejoin="round"><path d="M7 9.667a2.667 2.667 0 0 1 2.667 -2.667h8.666a2.667 2.667 0 0 1 2.667 2.667v8.666a2.667 2.667 0 0 1 -2.667 2.667h-8.666a2.667 2.667 0 0 1 -2.667 -2.667z"/><path d="M4.012 16.737a2.005 2.005 0 0 1 -1.012 -1.737v-10c0 -1.1 .9 -2 2 -2h10c.75 0 1.158 .385 1.5 1"/></svg></div><div class="sep" style="left:1105.60px;top:899.70px;height:21.2px;background:#2e2e2e"></div><div class="btn" style="left:1117.60px;top:894.60px;width:103.7px;height:31.9px"></div><div class="t " style="left:1130.40px;top:900.67px;font-size:16.6px;color:#fafafa;font-weight:400;-webkit-text-stroke:0.15px currentColor">View Code</div>
<div class="t " style="left:714.50px;top:970.84px;font-size:21.5px;color:#fafafa;font-weight:700;">Area Chart - Linear</div>
<div class="t " style="left:714.50px;top:1006.75px;font-size:19.5px;color:#a1a1a1;font-weight:400;">Showing total visitors for the last 6 months</div>

<div class="card" style="left:1293px;top:879.8px;width:557.7px;height:300px"></div>
<div class="hline" style="left:1294.3px;top:939.7px;width:555px"></div>
<div class="icon" style="left:1315.58px;top:900.78px;width:19.4px;height:19.4px;color:#a1a1a1"><svg viewBox="0 0 24 24" fill="none" stroke="currentColor" stroke-width="2" stroke-linecap="round" stroke-linejoin="round"><path d="M3 3v16a2 2 0 0 0 2 2h16"/><path d="M7 11.207a.5.5 0 0 1 .146-.353l2-2a.5.5 0 0 1 .708 0l3.292 3.292a.5.5 0 0 0 .708 0l4.292-4.292a.5.5 0 0 1 .854.353V16a1 1 0 0 1-1 1H8a1 1 0 0 1-1-1z"/></svg></div><div class="t " style="left:1343.20px;top:899.85px;font-size:17.4px;color:#a1a1a1;font-weight:400;">Area Chart</div><div class="icon" style="left:1680.00px;top:899.90px;width:20.8px;height:20.8px;color:#fafafa"><svg viewBox="0 0 24 24" fill="none" stroke="currentColor" stroke-width="1.9" stroke-linecap="round" stroke-linejoin="round"><path d="M7 9.667a2.667 2.667 0 0 1 2.667 -2.667h8.666a2.667 2.667 0 0 1 2.667 2.667v8.666a2.667 2.667 0 0 1 -2.667 2.667h-8.666a2.667 2.667 0 0 1 -2.667 -2.667z"/><path d="M4.012 16.737a2.005 2.005 0 0 1 -1.012 -1.737v-10c0 -1.1 .9 -2 2 -2h10c.75 0 1.158 .385 1.5 1"/></svg></div><div class="sep" style="left:1717.30px;top:899.70px;height:21.2px;background:#2e2e2e"></div><div class="btn" style="left:1729.30px;top:894.60px;width:103.7px;height:31.9px"></div><div class="t " style="left:1742.10px;top:900.67px;font-size:16.6px;color:#fafafa;font-weight:400;-webkit-text-stroke:0.15px currentColor">View Code</div>
<div class="t " style="left:1326.00px;top:970.84px;font-size:21.5px;color:#fafafa;font-weight:700;">Area Chart - Step</div>
<div class="t " style="left:1326.00px;top:1006.75px;font-size:19.5px;color:#a1a1a1;font-weight:400;">Showing total visitors for the last 6 months</div>
<svg style="position:absolute;left:0;top:0" width="1920" height="1081">
<line x1="117.50" x2="579.00" y1="1063.75" y2="1063.75" stroke="#212121" stroke-width="1.33"/><path d="M117.5,1158.89C148.27,1122.01,179.03,1085.12,209.8,1074.4C240.57,1063.68,271.33,1079.12,302.1,1122.68C332.87,1166.24,363.63,1237.93,394.4,1239.12C425.17,1240.31,455.93,1171,486.7,1142.56C517.47,1114.12,548.23,1126.57,579,1139.01L579.00,1290.95L117.50,1290.95Z" fill="#8ec5ff" fill-opacity="0.4"/><path d="M117.5,1158.89C148.27,1122.01,179.03,1085.12,209.8,1074.4C240.57,1063.68,271.33,1079.12,302.1,1122.68C332.87,1166.24,363.63,1237.93,394.4,1239.12C425.17,1240.31,455.93,1171,486.7,1142.56C517.47,1114.12,548.23,1126.57,579,1139.01" fill="none" stroke="#8ec5ff" stroke-width="1.33"/>
<line x1="729.00" x2="1191.00" y1="1063.75" y2="1063.75" stroke="#212121" stroke-width="1.33"/><path d="M729.00,1158.89L821.40,1074.40L913.80,1122.68L1006.20,1239.12L1098.60,1142.56L1191.00,1139.01L1191.00,1290.95L729.00,1290.95Z" fill="#8ec5ff" fill-opacity="0.4"/><path d="M729.00,1158.89L821.40,1074.40L913.80,1122.68L1006.20,1239.12L1098.60,1142.56L1191.00,1139.01" fill="none" stroke="#8ec5ff" stroke-width="1.33"/>
<line x1="1341.00" x2="1802.70" y1="1063.75" y2="1063.75" stroke="#212121" stroke-width="1.33"/><path d="M1341.00,1158.89L1387.17,1158.89L1387.17,1074.40L1479.51,1074.40L1479.51,1122.68L1571.85,1122.68L1571.85,1239.12L1664.19,1239.12L1664.19,1142.56L1756.53,1142.56L1756.53,1139.01L1802.70,1139.01L1802.70,1290.95L1341.00,1290.95Z" fill="#8ec5ff" fill-opacity="0.4"/><path d="M1341.00,1158.89L1387.17,1158.89L1387.17,1074.40L1479.51,1074.40L1479.51,1122.68L1571.85,1122.68L1571.85,1239.12L1664.19,1239.12L1664.19,1142.56L1756.53,1142.56L1756.53,1139.01L1802.70,1139.01" fill="none" stroke="#8ec5ff" stroke-width="1.33"/>
</svg>
</body></html>
